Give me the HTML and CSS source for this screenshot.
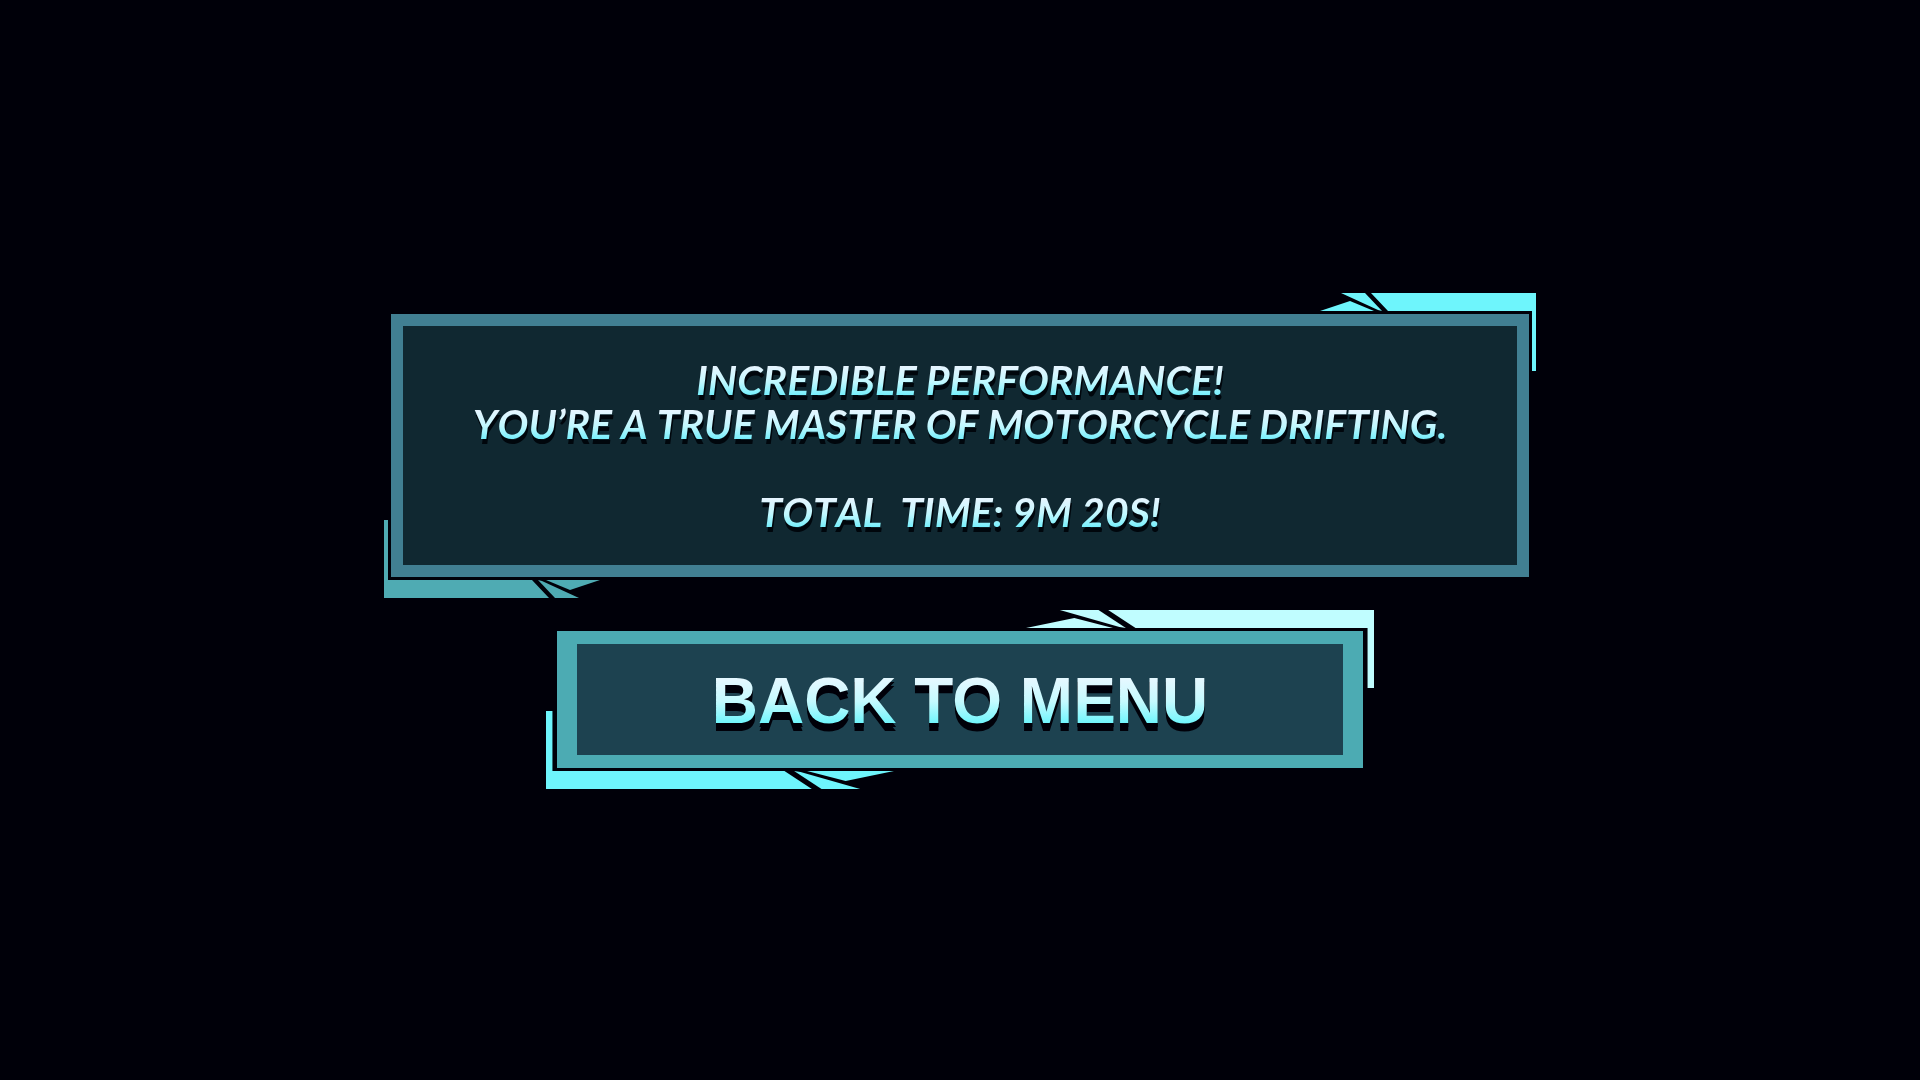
FILE: index.html
```html
<!DOCTYPE html>
<html lang="en">
<head>
  <meta charset="UTF-8" />
  <meta name="viewport" content="width=device-width, initial-scale=1.0"/>
  <title>Results</title>
  <link rel="stylesheet" href="styles.css">
</head>
<body>

  <!-- corner shape shared by the panel and the button -->
  <svg class="hidden" aria-hidden="true">
    <symbol id="corner" viewBox="0 0 216 78" preserveAspectRatio="none">
      <polygon points="51,0 216,0 216,78 212,78 212,18 68,18" />
      <polygon points="21,0 45,0 62,18 58,17" />
      <polygon points="0,18 30,8 54,18" />
    </symbol>
  </svg>

  <main class="results">
    <section class="panel">
      <svg class="corner corner-top" aria-hidden="true"><use href="#corner" /></svg>
      <svg class="corner corner-bottom" aria-hidden="true"><use href="#corner" /></svg>
      <p>INCREDIBLE PERFORMANCE!</p>
      <p>YOU’RE A TRUE MASTER OF MOTORCYCLE DRIFTING.</p>
      <p class="time">TOTAL  TIME: 9M 20S!</p>
    </section>

    <button class="menu-btn" type="button">
      <svg class="corner corner-top" aria-hidden="true"><use href="#corner" /></svg>
      <svg class="corner corner-bottom" aria-hidden="true"><use href="#corner" /></svg>
      <span>BACK TO MENU</span>
    </button>
  </main>

</body>
</html>
```
FILE: styles.css
```css
* {
  box-sizing: border-box;
}

body {
  margin: 0;
  background-color: #000009;
  font-family: "Liberation Sans", Arial, sans-serif;
}

.hidden {
  display: none;
}

.results {
  min-height: 100vh;
  padding-top: 2px;
  display: flex;
  flex-direction: column;
  align-items: center;
  justify-content: center;
  gap: 54px;
}

.panel {
  position: relative;
  width: 92%;
  max-width: 1138px;
  padding: 32px 20px 31px;
  border: 12px solid #417f92;
  background-color: #102831;
  text-align: center;
}

.panel p {
  margin: 0;
  font-family: Lato, "Liberation Sans", sans-serif;
  font-size: 41px;
  font-weight: bold;
  font-style: italic;
  font-kerning: none;
  line-height: 44px;
  white-space: pre-wrap;
  color: transparent;
  background: linear-gradient(#e6f5ff 20%, #c0f8ff 55%, #6cedfb 88%);
  -webkit-background-clip: text;
  background-clip: text;
  filter: drop-shadow(1px 5px 0 #00060c);
}

.panel .time {
  margin-top: 44px;
}

.menu-btn {
  position: relative;
  width: 80%;
  max-width: 806px;
  padding: 22px 20px 18px;
  border: solid #4cabb3;
  border-width: 13px 20px;
  background-color: #1d4250;
  font-family: inherit;
  cursor: pointer;
}

.menu-btn span {
  display: block;
  font-size: 64px;
  font-weight: bold;
  line-height: 71px;
  color: transparent;
  background: linear-gradient(#e4f8ff 20%, #c4faff 50%, #6cf5fc 82%);
  -webkit-background-clip: text;
  background-clip: text;
  filter: drop-shadow(0 4px 0 #000009) drop-shadow(0 4px 0 #000009);
}

/* angular accents on the corners */
.corner {
  position: absolute;
  width: 216px;
  height: 78px;
  pointer-events: none;
}

.corner-top {
  top: -33px;
  right: -19px;
  fill: #6ef5fc;
}

.corner-bottom {
  bottom: -33px;
  left: -19px;
  fill: #4fabb3;
  transform: rotate(180deg);
}

.menu-btn .corner {
  width: 348px;
}

.menu-btn .corner-top {
  top: -34px;
  right: -31px;
  fill: #c0fdff;
}

.menu-btn .corner-bottom {
  bottom: -34px;
  left: -31px;
  fill: #6ef5fc;
}
```
